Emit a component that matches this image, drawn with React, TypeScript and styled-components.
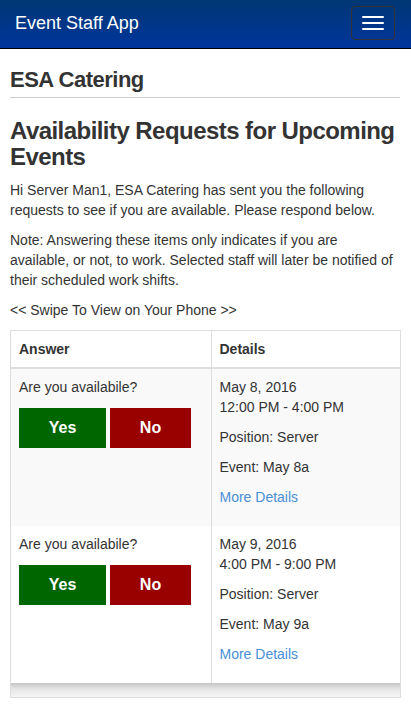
import * as React from 'react';
import styled, { createGlobalStyle } from 'styled-components';

const GlobalStyle = createGlobalStyle`
  html, body {
    margin: 0;
    padding: 0;
    background: #fff;
  }
  body {
    font-family: "Liberation Sans", Arial, sans-serif;
    font-size: 14px;
    line-height: 20px;
    color: #333;
  }
  * {
    box-sizing: border-box;
  }
`;

interface IRequest {
  date: string;
  time: string;
  position: string;
  event: string;
}

const requests: IRequest[] = [
  { date: 'May 8, 2016', time: '12:00 PM - 4:00 PM', position: 'Server', event: 'May 8a' },
  { date: 'May 9, 2016', time: '4:00 PM - 9:00 PM', position: 'Server', event: 'May 9a' },
];

export default function App(): JSX.Element {
  return (
    <>
      <GlobalStyle />
      <Navbar>
        <Brand>Event Staff App</Brand>
        <Toggle aria-label="menu">
          <Bar />
          <Bar />
          <Bar />
        </Toggle>
      </Navbar>
      <Container>
        <CompanyTitle>ESA Catering</CompanyTitle>
        <PageTitle>Availability Requests for Upcoming Events</PageTitle>
        <Text>
          Hi Server Man1, ESA Catering has sent you the following requests to see if you are
          available. Please respond below.
        </Text>
        <Text>
          Note: Answering these items only indicates if you are available, or not, to work.
          Selected staff will later be notified of their scheduled work shifts.
        </Text>
        <Text>&lt;&lt; Swipe To View on Your Phone &gt;&gt;</Text>
        <TableWrap>
          <Table>
            <thead>
              <tr>
                <Th $width={200}>Answer</Th>
                <Th>Details</Th>
              </tr>
            </thead>
            <tbody>
              {requests.map((r, i) => (
                <Row key={r.date} $striped={i % 2 === 0}>
                  <Td>
                    <Question>Are you availabile?</Question>
                    <ButtonRow>
                      <AnswerButton $variant="yes">Yes</AnswerButton>
                      <AnswerButton $variant="no">No</AnswerButton>
                    </ButtonRow>
                  </Td>
                  <Td>
                    <DetailLine>
                      {r.date}
                      <br />
                      {r.time}
                    </DetailLine>
                    <DetailLine>Position: {r.position}</DetailLine>
                    <DetailLine>Event: {r.event}</DetailLine>
                    <DetailLink href="#">More Details</DetailLink>
                  </Td>
                </Row>
              ))}
            </tbody>
          </Table>
          <ScrollTrack />
        </TableWrap>
      </Container>
    </>
  );
}

const Navbar = styled.nav`
  height: 49px;
  display: flex;
  align-items: center;
  justify-content: space-between;
  padding: 0 16px 0 15px;
  background: linear-gradient(to bottom, #003774 0%, #00359c 100%);
  border-bottom: 1px solid #000;
`;

const Brand = styled.span`
  font-size: 18px;
  color: #fff;
  line-height: 20px;
  margin-top: -2px;
`;

const Toggle = styled.button`
  width: 44px;
  height: 34px;
  margin-top: -3px;
  padding: 0 10px;
  background: transparent;
  border: 1px solid #333;
  border-radius: 4px;
  display: flex;
  flex-direction: column;
  justify-content: center;
  gap: 4px;
`;

const Bar = styled.span`
  display: block;
  width: 22px;
  height: 2px;
  background: #fff;
  border-radius: 1px;
`;

const Container = styled.main`
  padding: 0 11px 0 10px;
`;

const CompanyTitle = styled.h1`
  margin: 19px 0 0;
  padding-bottom: 5px;
  font-size: 22px;
  line-height: 24px;
  font-weight: bold;
  letter-spacing: -0.5px;
  border-bottom: 1px solid #ccc;
`;

const PageTitle = styled.h2`
  margin: 20px 0 10px;
  font-size: 24px;
  line-height: 26px;
  font-weight: bold;
  letter-spacing: -0.55px;
`;

const Text = styled.p`
  margin: 0 0 10px;
`;

const TableWrap = styled.div`
  border: 1px solid #ddd;
  margin-right: -1px;
`;

const Table = styled.table`
  width: 100%;
  border-collapse: collapse;
`;

const Th = styled.th<{ $width?: number }>`
  width: ${(p) => (p.$width ? `${p.$width}px` : 'auto')};
  text-align: left;
  vertical-align: middle;
  padding: 8px;
  height: 37px;
  font-weight: bold;
  border-bottom: 2px solid #ddd;
  & + & {
    border-left: 1px solid #ddd;
  }
`;

const Row = styled.tr<{ $striped: boolean }>`
  background: ${(p) => (p.$striped ? '#f9f9f9' : '#fff')};
  & + & td {
    border-top: 1px solid #ddd;
  }
`;

const Td = styled.td`
  vertical-align: top;
  padding: 8px 8px 9px;
  & + & {
    border-left: 1px solid #ddd;
  }
`;

const Question = styled.p`
  margin: 0 0 11px;
`;

const ButtonRow = styled.div`
  display: flex;
  gap: 4px;
`;

const AnswerButton = styled.button<{ $variant: 'yes' | 'no' }>`
  width: ${(p) => (p.$variant === 'yes' ? '87px' : '81px')};
  height: 40px;
  border: none;
  border-radius: 0;
  padding: 0;
  font-family: "Liberation Sans", Arial, sans-serif;
  font-size: 16px;
  font-weight: bold;
  color: #fff;
  background: ${(p) => (p.$variant === 'yes' ? '#006600' : '#990000')};
`;

const DetailLine = styled.p`
  margin: 0 0 10px;
`;

const DetailLink = styled.a`
  display: block;
  color: #4a8fd6;
  text-decoration: none;
  margin-bottom: 10px;
`;

const ScrollTrack = styled.div`
  height: 14px;
  background: linear-gradient(to bottom, #c6c6c6 0%, #e6e6e6 45%, #f6f6f6 100%);
`;
